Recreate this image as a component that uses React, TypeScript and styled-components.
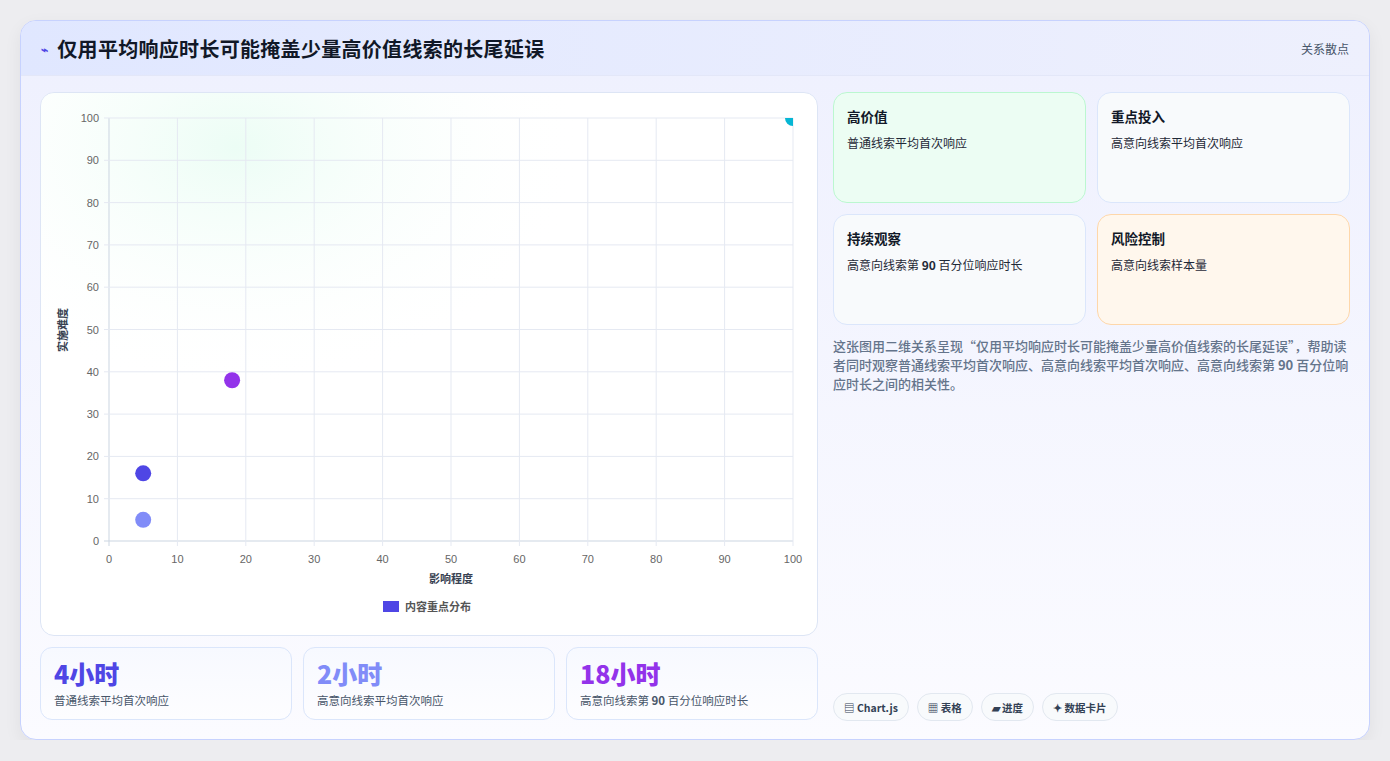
import React from "react";
import styled, { createGlobalStyle } from "styled-components";

const G = createGlobalStyle`
  html,body{margin:0;background:#ededf0;font-family:"Noto Sans CJK SC","Noto Sans",sans-serif;}
  *{box-sizing:border-box;}
`;
const Page = styled.div`padding:20px 20px 0 20px;`;
const Card = styled.div`
  width:1350px;height:720px;border:1px solid #c7d2fe;border-radius:16px;overflow:hidden;
  background:linear-gradient(180deg,#eef0fe,#fbfbff);display:flex;flex-direction:column;
  box-shadow:0 6px 18px rgba(0,0,0,0.06);
`;
const Header = styled.div`
  height:55px;flex:none;display:flex;align-items:center;justify-content:space-between;padding:0 20px;
  background:linear-gradient(90deg,#e0e7ff,#eef0fd);border-bottom:1px solid #e3e7f8;
`;
const Title = styled.h1`margin:0;font-size:20px;font-weight:700;color:#111827;display:flex;align-items:center;gap:9px;letter-spacing:0.3px;`;
const Bolt = styled.span`color:#4f46e5;font-size:12px;`;
const Tag = styled.span`font-size:12px;color:#475569;`;
const Body = styled.div`flex:1;display:flex;gap:15px;padding:16px 19px 18px 19px;`;
const Left = styled.div`width:778px;display:flex;flex-direction:column;gap:11px;`;
const ChartBox = styled.div`height:544px;background:#fff;border:1px solid #dde5f5;border-radius:14px;overflow:hidden;`;
const Stats = styled.div`display:grid;grid-template-columns:repeat(3,1fr);gap:11px;`;
const Stat = styled.div`height:73px;border:1px solid #dbe6fb;border-radius:12px;background:linear-gradient(180deg,#f7f9ff,#fdfdff);padding:10px 13px;`;
const Num = styled.div<{c:string}>`font-size:25px;font-weight:800;color:${p=>p.c};line-height:30px;`;
const StatL = styled.div`font-size:11.5px;color:#475569;margin-top:4px;`;
const Right = styled.div`flex:1;display:flex;flex-direction:column;`;
const Grid = styled.div`display:grid;grid-template-columns:1fr 1fr;gap:11px 11px;`;
const Q = styled.div<{bg:string;bd:string}>`height:111px;border-radius:14px;background:${p=>p.bg};border:1px solid ${p=>p.bd};padding:13px 13px;`;
const QT = styled.div`font-size:13.5px;font-weight:700;color:#111827;`;
const QS = styled.div`font-size:12px;color:#1f2937;margin-top:8px;`;
const Para = styled.p`margin:11px 0 0;font-size:13px;line-height:19px;color:#64748b;font-weight:500;`;
const Chips = styled.div`margin-top:auto;display:flex;gap:8px;`;
const Chip = styled.span`height:28px;padding:0 10px;border:1px solid #e2e8f0;border-radius:14px;background:#f8fafc;font-size:10.5px;font-weight:700;color:#334155;display:flex;align-items:center;gap:4px;`;

const X0=68,X1=752,Y0=25,Y1=448;
const sx=(v:number)=>X0+(X1-X0)*v/100, sy=(v:number)=>Y1-(Y1-Y0)*v/100;
const ticks=[0,10,20,30,40,50,60,70,80,90,100];

function Chart(){
  return <svg width="778" height="544" style={{display:"block"}}>
    <defs>
      <radialGradient id="gl" cx="0.25" cy="0.1" r="0.45">
        <stop offset="0" stopColor="#ecfdf5"/><stop offset="1" stopColor="#fff" stopOpacity="0"/>
      </radialGradient>
      <clipPath id="cp"><rect x={X0} y={Y0} width={X1-X0} height={Y1-Y0}/></clipPath>
    </defs>
    <rect width="778" height="544" fill="url(#gl)"/>
    {ticks.map(t=><g key={t}>
      <line x1={sx(t)} x2={sx(t)} y1={Y0} y2={Y1+5} stroke={t===0?"#cbd5e1":"#e5e9f2"}/>
      <line x1={X0-5} x2={X1} y1={sy(t)} y2={sy(t)} stroke={t===0?"#cbd5e1":"#e5e9f2"}/>
      <text x={X0-10} y={sy(t)+4} textAnchor="end" fontSize="11" fill="#666" fontFamily="Liberation Sans">{t}</text>
      <text x={sx(t)} y={Y1+22} textAnchor="middle" fontSize="11" fill="#666" fontFamily="Liberation Sans">{t}</text>
    </g>)}
    <g clipPath="url(#cp)">
      <circle cx={sx(5)} cy={sy(5)} r="8" fill="#818cf8"/>
      <circle cx={sx(5)} cy={sy(16)} r="8" fill="#4f46e5"/>
      <circle cx={sx(18)} cy={sy(38)} r="8" fill="#9333ea"/>
      <circle cx={sx(100)} cy={sy(100)} r="8" fill="#06b6d4"/>
    </g>
    <text x="410" y="490" textAnchor="middle" fontSize="11" fontWeight="700" fill="#374151">影响程度</text>
    <text transform="translate(26 237) rotate(-90)" textAnchor="middle" fontSize="11" fontWeight="700" fill="#374151">实施难度</text>
    <rect x="342" y="508" width="16" height="11" fill="#4f46e5"/>
    <text x="364" y="518" fontSize="11" fontWeight="700" fill="#555">内容重点分布</text>
  </svg>;
}

export default function App(){
  return <Page><G/><Card>
    <Header><Title><Bolt>⌁</Bolt>仅用平均响应时长可能掩盖少量高价值线索的长尾延误</Title><Tag>关系散点</Tag></Header>
    <Body>
      <Left>
        <ChartBox><Chart/></ChartBox>
        <Stats>
          <Stat><Num c="#4f46e5">4小时</Num><StatL>普通线索平均首次响应</StatL></Stat>
          <Stat><Num c="#818cf8">2小时</Num><StatL>高意向线索平均首次响应</StatL></Stat>
          <Stat><Num c="#9333ea">18小时</Num><StatL>高意向线索第 <b>90</b> 百分位响应时长</StatL></Stat>
        </Stats>
      </Left>
      <Right>
        <Grid>
          <Q bg="#ecfdf3" bd="#bbf7d0"><QT>高价值</QT><QS>普通线索平均首次响应</QS></Q>
          <Q bg="#f8fafc" bd="#dbe6fb"><QT>重点投入</QT><QS>高意向线索平均首次响应</QS></Q>
          <Q bg="#f8fafc" bd="#dbe6fb"><QT>持续观察</QT><QS>高意向线索第 <b>90</b> 百分位响应时长</QS></Q>
          <Q bg="#fff7ed" bd="#fed7aa"><QT>风险控制</QT><QS>高意向线索样本量</QS></Q>
        </Grid>
        <Para>这张图用二维关系呈现“仅用平均响应时长可能掩盖少量高价值线索的长尾延误”，帮助读者同时观察普通线索平均首次响应、高意向线索平均首次响应、高意向线索第 <b>90</b> 百分位响应时长之间的相关性。</Para>
        <Chips><Chip>▤ Chart.js</Chip><Chip>▦ 表格</Chip><Chip>▰ 进度</Chip><Chip>✦ 数据卡片</Chip></Chips>
      </Right>
    </Body>
  </Card></Page>;
}
